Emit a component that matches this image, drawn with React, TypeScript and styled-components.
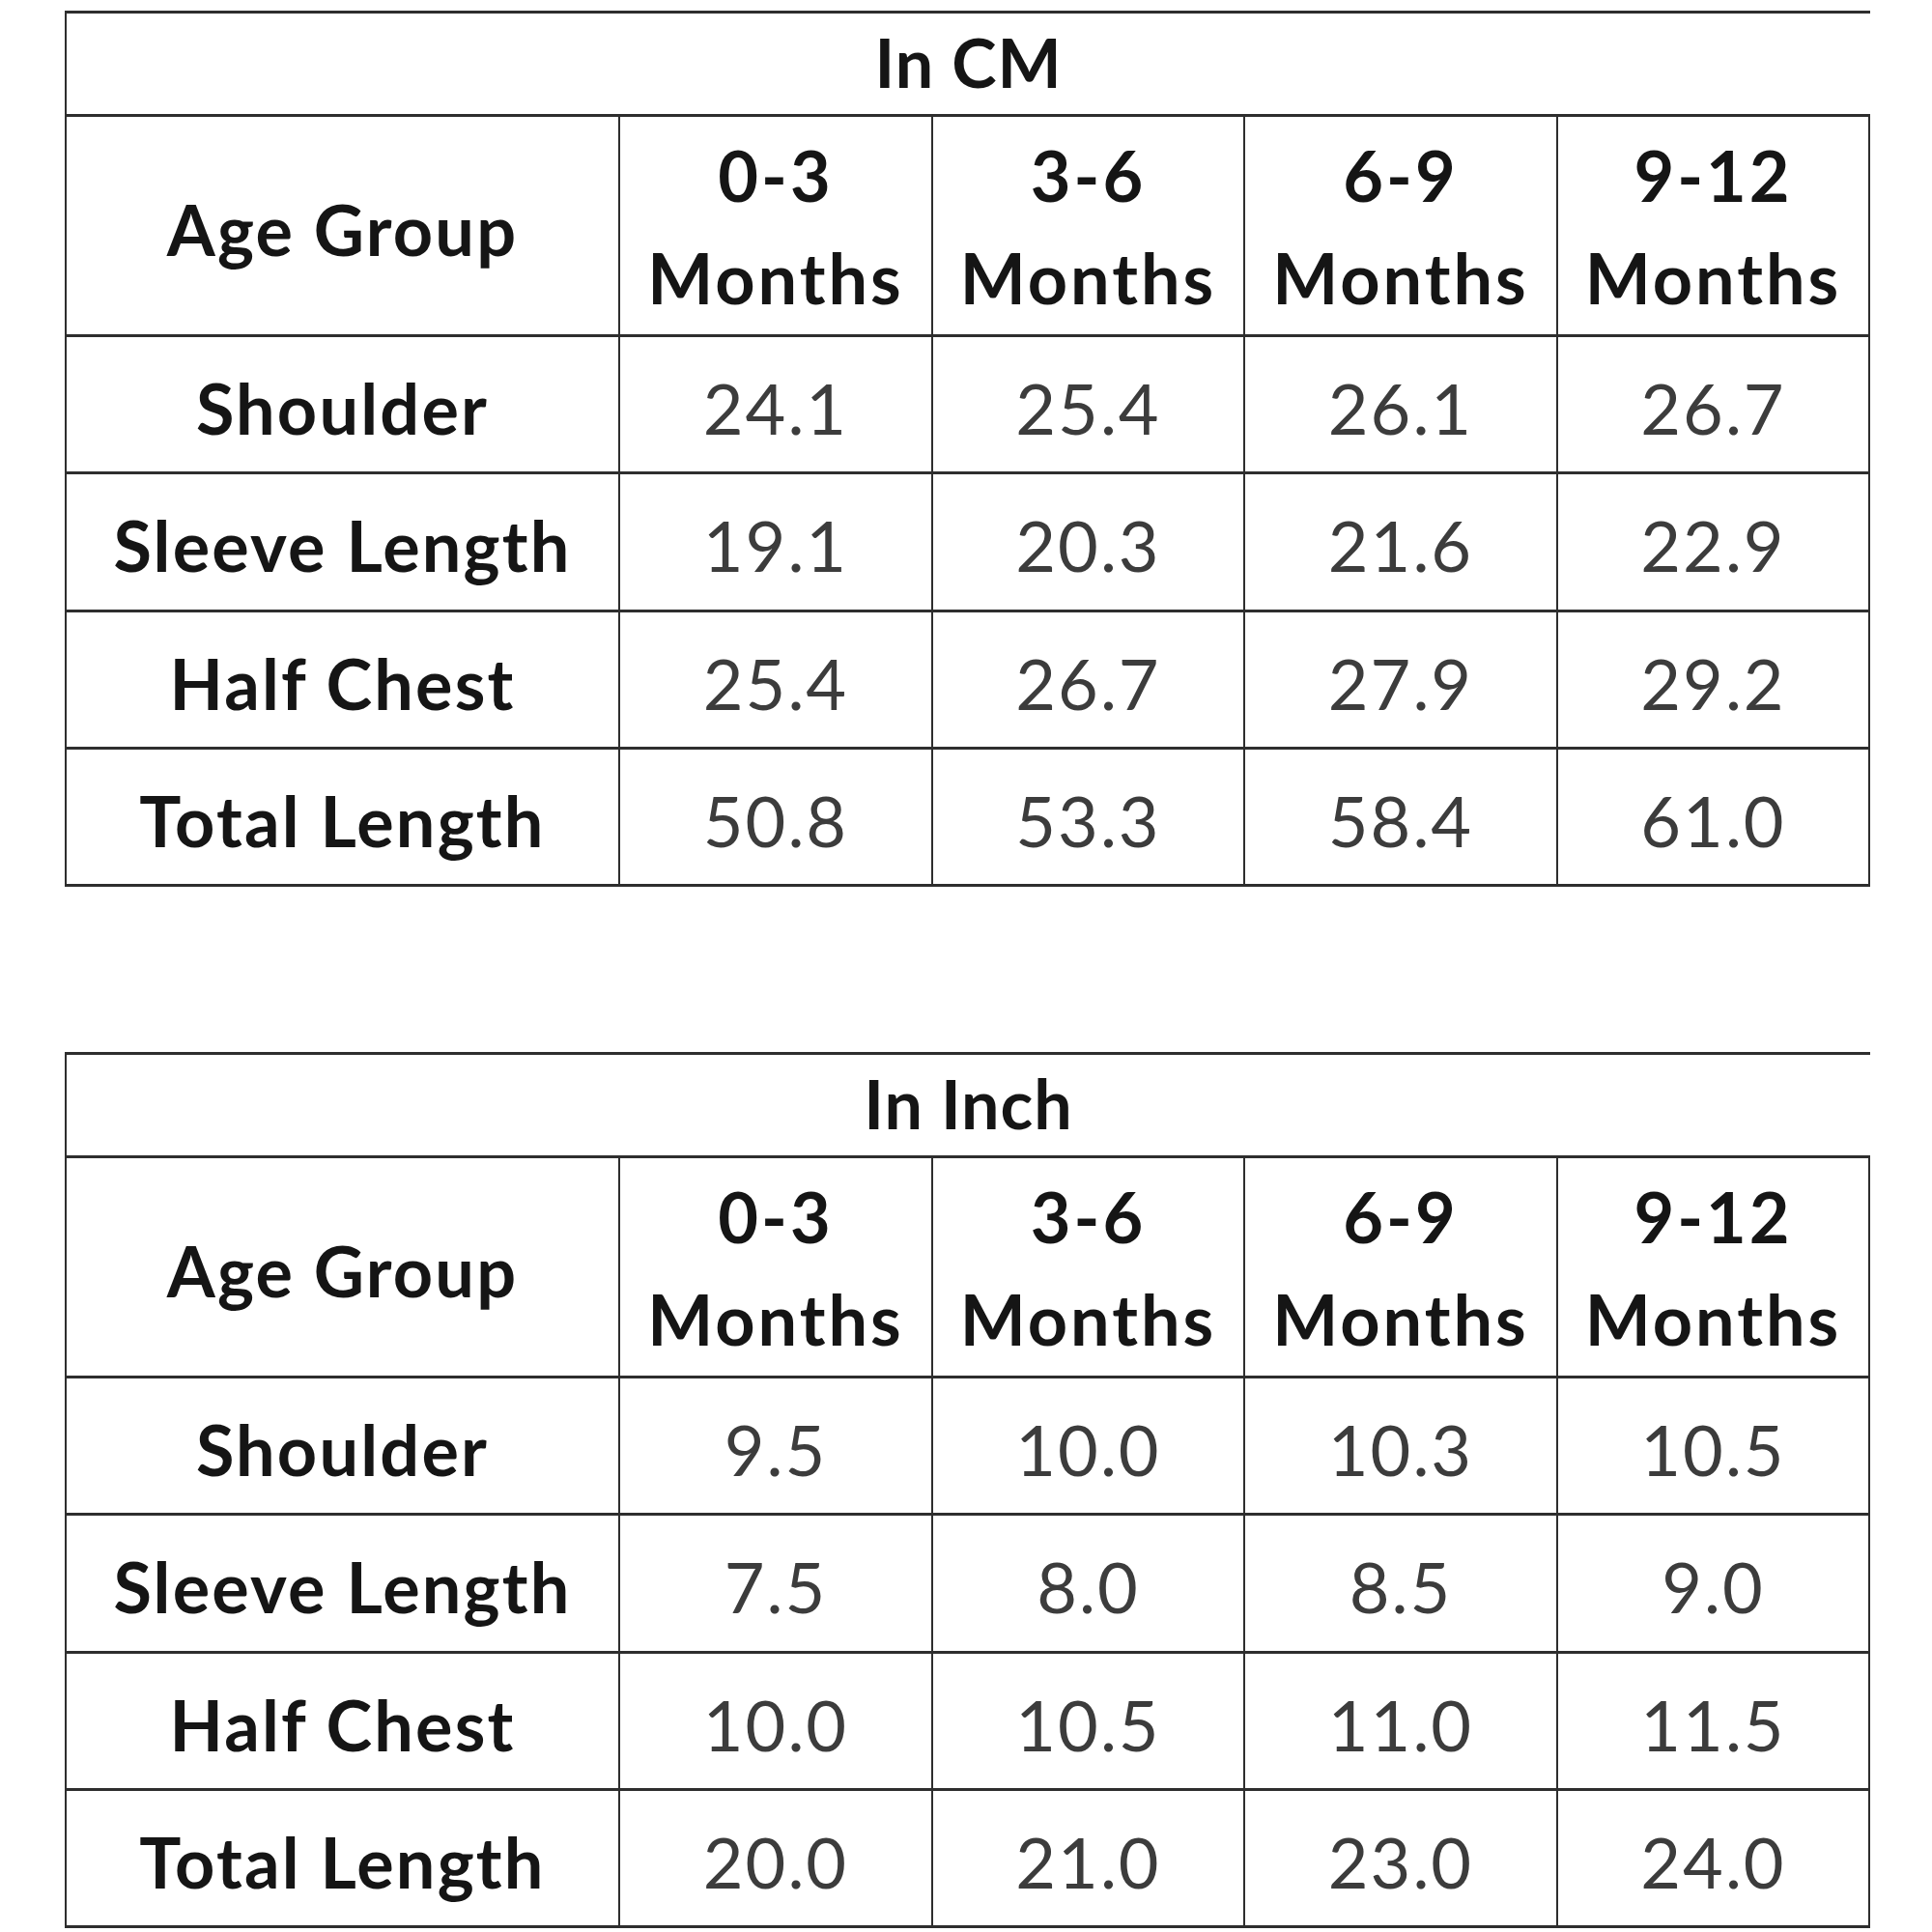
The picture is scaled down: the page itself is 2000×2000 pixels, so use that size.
import React from "react";
import styled, { createGlobalStyle } from "styled-components";

const Global = createGlobalStyle`
  html, body { margin: 0; padding: 0; background: #ffffff; }
  body { font-family: Lato, "Open Sans", "Liberation Sans", sans-serif; }
`;

const Page = styled.div`
  display: flex;
  flex-direction: column;
  gap: 171px;
  padding: 11px 0 0 67px;
  width: 2000px;
  box-sizing: border-box;
`;

const Grid = styled.div`
  display: grid;
  grid-template-columns: 573px 324px 323px 324px 323px;
  grid-template-rows: 107px 228px 142px 143px 142px 142px;
  width: max-content;
  border-top: 3px solid #2e2e2e;
  border-left: 2px solid #2e2e2e;
`;

const Cell = styled.div<{ $noRight?: boolean; $span?: number }>`
  box-sizing: border-box;
  display: flex;
  flex-direction: column;
  align-items: center;
  justify-content: center;
  text-align: center;
  border-bottom: 3px solid #2e2e2e;
  border-right: ${(p) => (p.$noRight ? "none" : "2px solid #2e2e2e")};
  grid-column: ${(p) => (p.$span ? `span ${p.$span}` : "auto")};
`;

const Title = styled.span`
  font-weight: 700;
  font-size: 70px;
  color: #151515;
  line-height: 1;
  letter-spacing: 1px;
  padding-bottom: 4px;
`;

const Label = styled.span`
  font-weight: 700;
  font-size: 72px;
  color: #151515;
  line-height: 1;
  letter-spacing: 2.2px;
  padding-top: 6px;
`;

const HeadLine = styled.span`
  font-weight: 700;
  font-size: 72px;
  color: #151515;
  line-height: 106px;
  letter-spacing: 3px;
`;

const Value = styled.span`
  font-weight: 400;
  font-size: 72px;
  color: #3c3c3c;
  line-height: 1;
  letter-spacing: 2px;
  padding-top: 6px;
`;

type TableData = {
  title: string;
  rows: { label: string; values: string[] }[];
};

const ages = ["0-3", "3-6", "6-9", "9-12"];

const tables: TableData[] = [
  {
    title: "In CM",
    rows: [
      { label: "Shoulder", values: ["24.1", "25.4", "26.1", "26.7"] },
      { label: "Sleeve Length", values: ["19.1", "20.3", "21.6", "22.9"] },
      { label: "Half Chest", values: ["25.4", "26.7", "27.9", "29.2"] },
      { label: "Total Length", values: ["50.8", "53.3", "58.4", "61.0"] },
    ],
  },
  {
    title: "In Inch",
    rows: [
      { label: "Shoulder", values: ["9.5", "10.0", "10.3", "10.5"] },
      { label: "Sleeve Length", values: ["7.5", "8.0", "8.5", "9.0"] },
      { label: "Half Chest", values: ["10.0", "10.5", "11.0", "11.5"] },
      { label: "Total Length", values: ["20.0", "21.0", "23.0", "24.0"] },
    ],
  },
];

const SizeTable: React.FC<{ data: TableData }> = ({ data }) => (
  <Grid>
    <Cell $span={5} $noRight>
      <Title>{data.title}</Title>
    </Cell>
    <Cell>
      <Label>Age Group</Label>
    </Cell>
    {ages.map((a) => (
      <Cell key={a}>
        <HeadLine>{a}</HeadLine>
        <HeadLine>Months</HeadLine>
      </Cell>
    ))}
    {data.rows.map((r) => (
      <React.Fragment key={r.label}>
        <Cell>
          <Label>{r.label}</Label>
        </Cell>
        {r.values.map((v, i) => (
          <Cell key={i}>
            <Value>{v}</Value>
          </Cell>
        ))}
      </React.Fragment>
    ))}
  </Grid>
);

export default function App() {
  return (
    <>
      <Global />
      <Page>
        {tables.map((t) => (
          <SizeTable key={t.title} data={t} />
        ))}
      </Page>
    </>
  );
}
